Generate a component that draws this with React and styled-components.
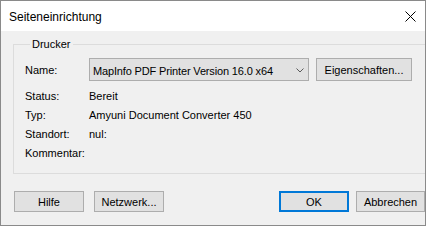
import React from "react";
import styled, { createGlobalStyle } from "styled-components";

const Global = createGlobalStyle`
  html, body { margin: 0; padding: 0; background: #ffffff; }
  body { font-family: "Liberation Sans", Arial, sans-serif; font-size: 11px; color: #000; }
  * { box-sizing: border-box; }
`;

const Window = styled.div`
  width: 426px;
  height: 226px;
  border: 1px solid #8a8a8a;
  background: #f0f0f0;
  display: flex;
  flex-direction: column;
  overflow: hidden;
`;

const TitleBar = styled.div`
  height: 30px;
  flex: none;
  background: #ffffff;
  display: flex;
  align-items: center;
  justify-content: space-between;
  padding: 0 9px 0 8px;
`;

const Title = styled.span`
  font-size: 12px;
  line-height: 16px;
  padding-top: 2px;
`;

const CloseIcon = styled.svg`
  display: block;
  margin-top: 1px;
`;

const Body = styled.div`
  display: flex;
  flex-direction: column;
  padding-left: 12px;
`;

const Group = styled.fieldset`
  margin: 7px 0 0 0;
  padding: 7px 0 13px 11px;
  border: 1px solid #dcdcdc;
  border-right: none;
  min-width: 0;
`;

const Legend = styled.legend`
  margin-left: 5px;
  padding: 0 2px;
  line-height: 13px;
`;

const NameRow = styled.div`
  display: flex;
  align-items: center;
  height: 23px;
`;

const Label = styled.span`
  width: 64px;
  flex: none;
  line-height: 13px;
  padding-top: ${(p) => (p.$inRow ? 2 : 0)}px;
`;

const Combo = styled.div`
  width: 220px;
  height: 23px;
  border: 1px solid #adadad;
  background: #e1e1e1;
  display: flex;
  align-items: center;
  justify-content: space-between;
  padding: 2px 4px 0 3px;
  letter-spacing: -0.15px;
`;

const Chevron = styled.svg`
  display: block;
  margin-top: -1px;
`;

const Button = styled.button`
  font: inherit;
  color: #000;
  width: ${(p) => p.$w || 70}px;
  height: ${(p) => p.$h || 21}px;
  margin: 0;
  margin-left: ${(p) => p.$ml || 0};
  padding: 1px 0 0 0;
  background: #e1e1e1;
  border: ${(p) => (p.$default ? "2px solid #0078d7" : "1px solid #adadad")};
  border-radius: 0;
  line-height: 13px;
  text-align: center;
  flex: none;
`;

const InfoGrid = styled.div`
  margin-top: 9px;
  display: grid;
  grid-template-columns: 64px auto;
  row-gap: 6px;
  line-height: 13px;
`;

const Value = styled.span`
  line-height: 13px;
  min-height: 13px;
`;

const ButtonRow = styled.div`
  display: flex;
  align-items: flex-start;
  margin-top: 17px;
  padding-left: 1px;
`;

const info = [
  ["Status:", "Bereit"],
  ["Typ:", "Amyuni Document Converter 450"],
  ["Standort:", "nul:"],
  ["Kommentar:", ""],
];

export default function App() {
  return (
    <>
      <Global />
      <Window>
        <TitleBar>
          <Title>Seiteneinrichtung</Title>
          <CloseIcon width="11" height="11" viewBox="0 0 11 11">
            <path d="M0.5 0.5 L10.5 10.5 M10.5 0.5 L0.5 10.5" stroke="#000" strokeWidth="1" fill="none" />
          </CloseIcon>
        </TitleBar>
        <Body>
          <Group>
            <Legend>Drucker</Legend>
            <NameRow>
              <Label $inRow>Name:</Label>
              <Combo>
                <span>MapInfo PDF Printer Version 16.0 x64</span>
                <Chevron width="8" height="5" viewBox="0 0 8 5">
                  <polyline points="0.5,0.5 4,4 7.5,0.5" stroke="#5a5a5a" strokeWidth="1" fill="none" />
                </Chevron>
              </Combo>
              <Button $w={96} $h={23} $ml="7px">Eigenschaften...</Button>
            </NameRow>
            <InfoGrid>
              {info.map(([k, v]) => (
                <React.Fragment key={k}>
                  <Label>{k}</Label>
                  <Value>{v}</Value>
                </React.Fragment>
              ))}
            </InfoGrid>
          </Group>
          <ButtonRow>
            <Button>Hilfe</Button>
            <Button $ml="10px">Netzwerk...</Button>
            <Button $default $ml="auto">OK</Button>
            <Button $w={69} $ml="7px">Abbrechen</Button>
          </ButtonRow>
        </Body>
      </Window>
    </>
  );
}
